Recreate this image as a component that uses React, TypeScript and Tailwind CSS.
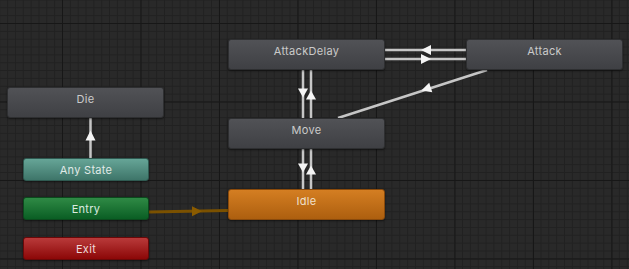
import React from 'react';

type Node = {
    label: string;
    x: number;
    y: number;
    w: number;
    h: number;
    tone: string;
    tall?: boolean;
};

const tones: Record<string, string> = {
    gray: 'bg-[linear-gradient(to_bottom,#515256,#3f4044)] text-[#cacaca] border-[#2e2f31]',
    teal: 'bg-[linear-gradient(to_bottom,#66a597,#3e7569)] text-[#e0eae7] border-[#2f5a51]',
    green: 'bg-[linear-gradient(to_bottom,#2f8a45,#0a5e24)] text-[#dcebe0] border-[#0b4a1d]',
    red: 'bg-[linear-gradient(to_bottom,#b93a3a,#8c0707)] text-[#eddada] border-[#6a0808]',
    orange: 'bg-[linear-gradient(to_bottom,#d47e22,#ad5f0f)] text-[#f0e0cc] border-[#8a4a0b]',
};

const nodes: Node[] = [
    { label: 'AttackDelay', x: 228, y: 39, w: 157, h: 31, tone: 'gray', tall: true },
    { label: 'Attack', x: 466, y: 39, w: 157, h: 31, tone: 'gray', tall: true },
    { label: 'Move', x: 228, y: 118, w: 157, h: 31, tone: 'gray', tall: true },
    { label: 'Die', x: 7, y: 87, w: 157, h: 31, tone: 'gray', tall: true },
    { label: 'Idle', x: 228, y: 189, w: 157, h: 31, tone: 'orange', tall: true },
    { label: 'Any State', x: 23, y: 158, w: 126, h: 23, tone: 'teal' },
    { label: 'Entry', x: 23, y: 197, w: 126, h: 23, tone: 'green' },
    { label: 'Exit', x: 23, y: 237, w: 126, h: 23, tone: 'red' },
];

// triangle centred at (cx, cy), pointing along (dx, dy)
function arrow(cx: number, cy: number, dx: number, dy: number, len = 10, half = 5) {
    const l = Math.hypot(dx, dy);
    const ux = dx / l;
    const uy = dy / l;
    const tip = [cx + (ux * len) / 2, cy + (uy * len) / 2];
    const bx = cx - (ux * len) / 2;
    const by = cy - (uy * len) / 2;
    const a = [bx - uy * half, by + ux * half];
    const b = [bx + uy * half, by - ux * half];
    return [tip, a, b].map((p) => p.join(',')).join(' ');
}

function Links() {
    const line = '#c6c6c6';
    const head = '#f4f4f4';
    return (
        <svg className="absolute inset-0" width={629} height={269}>
            {/* AttackDelay <-> Move */}
            <line x1={303} y1={70} x2={303} y2={118} stroke={line} strokeWidth={2.5} />
            <line x1={311} y1={70} x2={311} y2={118} stroke={line} strokeWidth={2.5} />
            <polygon points={arrow(303, 93, 0, 1, 9)} fill={head} />
            <polygon points={arrow(311, 95, 0, -1, 9)} fill={head} />

            {/* Move <-> Idle */}
            <line x1={303} y1={149} x2={303} y2={189} stroke={line} strokeWidth={2.5} />
            <line x1={311} y1={149} x2={311} y2={189} stroke={line} strokeWidth={2.5} />
            <polygon points={arrow(303, 168, 0, 1, 9)} fill={head} />
            <polygon points={arrow(311, 170, 0, -1, 9)} fill={head} />

            {/* AttackDelay <-> Attack */}
            <line x1={385} y1={50} x2={466} y2={50} stroke={line} strokeWidth={2.5} />
            <line x1={385} y1={59} x2={466} y2={59} stroke={line} strokeWidth={2.5} />
            <polygon points={arrow(426, 50, -1, 0)} fill={head} />
            <polygon points={arrow(426, 59, 1, 0)} fill={head} />

            {/* Attack -> Move */}
            <line x1={487} y1={70} x2={338} y2={118} stroke={line} strokeWidth={2.5} />
            <polygon points={arrow(426, 89, -149, 48)} fill={head} />

            {/* Any State -> Die */}
            <line x1={90.5} y1={118} x2={90.5} y2={158} stroke={line} strokeWidth={2.5} />
            <polygon points={arrow(90.5, 135.5, 0, -1)} fill={head} />

            {/* Entry -> Idle */}
            <line x1={149} y1={212} x2={228} y2={210.5} stroke="#7b5100" strokeWidth={3} />
            <polygon points={arrow(197, 211.2, 1, 0, 10, 5)} fill="#8a5b00" />
        </svg>
    );
}

export default function App() {
    return (
        <div
            className="relative w-[629px] h-[269px] overflow-hidden bg-[#292929] font-['Inter','Liberation_Sans',sans-serif] bg-[linear-gradient(to_right,#171717_1px,transparent_1px),linear-gradient(to_bottom,#171717_1px,transparent_1px),linear-gradient(to_right,#212121_1px,transparent_1px),linear-gradient(to_bottom,#212121_1px,transparent_1px)] [background-size:78.5px_78.5px,78.5px_78.5px,7.85px_7.85px,7.85px_7.85px] [background-position:62px_23px,62px_23px,62px_23px,62px_23px]">
            <Links />
            {nodes.map((n) => (
                <div
                    key={n.label}
                    className={`absolute flex justify-center rounded-[3px] border text-[11px] tracking-[0.3px] shadow-[0_1px_2px_rgba(0,0,0,0.5)] ${tones[n.tone]} ${n.tall ? 'items-start pt-[4px]' : 'items-center'}`}
                    style={{ left: n.x, top: n.y, width: n.w, height: n.h }}>
                    <span className="leading-[14px]">{n.label}</span>
                </div>
            ))}
        </div>
    );
}
